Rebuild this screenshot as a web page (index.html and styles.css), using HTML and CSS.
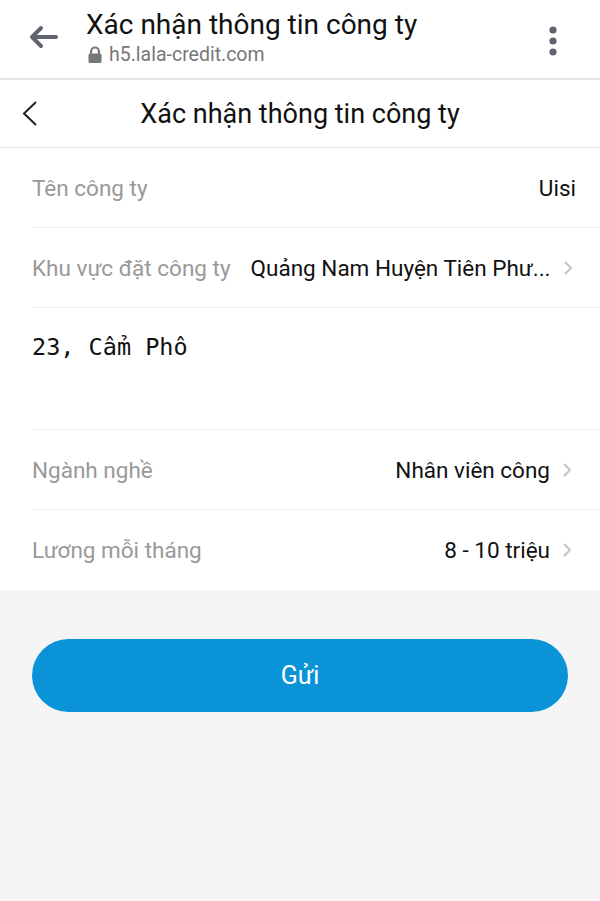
FILE: index.html
```html
<!DOCTYPE html>
<html lang="vi">
<head>
  <meta charset="UTF-8" />
  <meta name="viewport" content="width=device-width, initial-scale=1.0"/>
  <title>Xác nhận thông tin công ty</title>
  <link rel="stylesheet" href="styles.css">
</head>
<body>

  <div class="browser-bar">
    <svg class="browser-back" width="40" height="40" viewBox="0 0 40 40">
      <path d="M33 17 H9 M18 8 L9 17 L18 26" fill="none" stroke="#5f6370" stroke-width="4" stroke-linecap="round" stroke-linejoin="round"/>
    </svg>
    <div class="browser-info">
      <div class="browser-title">Xác nhận thông tin công ty</div>
      <div class="browser-url">
        <svg width="16" height="18" viewBox="0 0 16 18">
          <path d="M4 8 V5.5 a4 4 0 0 1 8 0 V8" fill="none" stroke="#777" stroke-width="2.2"/>
          <rect x="1.5" y="7.5" width="13" height="9.5" rx="1.5" fill="#777"/>
        </svg>
        h5.lala-credit.com
      </div>
    </div>
    <svg class="browser-menu" width="12" height="32" viewBox="0 0 12 32">
      <circle cx="6" cy="5" r="3.6" fill="#5f6370"/>
      <circle cx="6" cy="16" r="3.6" fill="#5f6370"/>
      <circle cx="6" cy="27" r="3.6" fill="#5f6370"/>
    </svg>
  </div>

  <div class="nav-bar">
    <svg class="nav-back" width="20" height="28" viewBox="0 0 20 28">
      <path d="M16 2 L4 13.5 L16 25" fill="none" stroke="#222" stroke-width="2"/>
    </svg>
    <h1>Xác nhận thông tin công ty</h1>
  </div>

  <div class="form">
    <div class="row">
      <span class="label">Tên công ty</span>
      <span class="value">Uisi</span>
    </div>
    <div class="row">
      <span class="label">Khu vực đặt công ty</span>
      <span class="value">Quảng Nam Huyện Tiên Phư...</span>
      <svg class="chevron" width="20" height="14" viewBox="0 0 20 14"><path d="M8 1 L14 7 L8 13" fill="none" stroke="#c4c4c4" stroke-width="2"/></svg>
    </div>
    <div class="row address">23, Cẩm Phô</div>
    <div class="row">
      <span class="label">Ngành nghề</span>
      <span class="value">Nhân viên công</span>
      <svg class="chevron" width="20" height="14" viewBox="0 0 20 14"><path d="M8 1 L14 7 L8 13" fill="none" stroke="#c4c4c4" stroke-width="2"/></svg>
    </div>
    <div class="row last">
      <span class="label">Lương mỗi tháng</span>
      <span class="value">8 - 10 triệu</span>
      <svg class="chevron" width="20" height="14" viewBox="0 0 20 14"><path d="M8 1 L14 7 L8 13" fill="none" stroke="#c4c4c4" stroke-width="2"/></svg>
    </div>
  </div>

  <div class="actions">
    <button class="submit-btn">Gửi</button>
  </div>

</body>
</html>
```

FILE: styles.css
```css
html, body {
  margin: 0;
  padding: 0;
}

body {
  font-family: Roboto, "Noto Sans", Arial, sans-serif;
  background-color: #f5f5f6;
  min-height: 901px;
}

.browser-bar {
  display: flex;
  align-items: center;
  height: 78px;
  background-color: #fff;
  border-bottom: 2px solid #e5e5e5;
}

.browser-back {
  margin-left: 23px;
  margin-right: 23px;
  margin-top: 2px;
}

.browser-info {
  flex: 1;
  padding-bottom: 2px;
}

.browser-title {
  font-size: 28px;
  color: #111;
  line-height: 30px;
}

.browser-url {
  display: flex;
  align-items: center;
  gap: 6px;
  font-size: 19.5px;
  color: #777;
  line-height: 24px;
  margin-top: 3px;
}

.browser-url svg {
  margin-left: 1px;
}

.browser-menu {
  margin-right: 41px;
  margin-top: 4px;
}

.nav-bar {
  display: flex;
  align-items: center;
  height: 67px;
  background-color: #fff;
  border-bottom: 1px solid #e8e8e8;
  position: relative;
}

.nav-back {
  margin-left: 20px;
  margin-top: 1px;
}

h1 {
  position: absolute;
  left: 0;
  right: 0;
  margin: 0;
  text-align: center;
  font-size: 27px;
  font-weight: normal;
  color: #111;
  pointer-events: none;
}

.form {
  background-color: #fff;
}

.row {
  display: flex;
  align-items: center;
  height: 79px;
  margin-left: 32px;
  padding-right: 24px;
  border-bottom: 1px solid #efefef;
  font-size: 22.5px;
}

.row.last {
  border-bottom: none;
  height: 80px;
}

.label {
  color: #999;
  white-space: nowrap;
}

.value {
  flex: 1;
  text-align: right;
  color: #111;
  margin-left: 20px;
  white-space: nowrap;
}

.chevron {
  flex: none;
  margin-left: 6px;
}

.row.address {
  display: block;
  height: 122px;
  box-sizing: border-box;
  padding-top: 25px;
  font-family: "DejaVu Sans Mono", monospace;
  font-size: 23.5px;
  color: #111;
}

.actions {
  padding: 49px 32px 0 32px;
}

.submit-btn {
  display: block;
  width: 100%;
  height: 73px;
  border: none;
  border-radius: 37px;
  background-color: #0a93d7;
  color: #fff;
  font-family: Roboto, "Noto Sans", Arial, sans-serif;
  font-size: 25px;
}
```
